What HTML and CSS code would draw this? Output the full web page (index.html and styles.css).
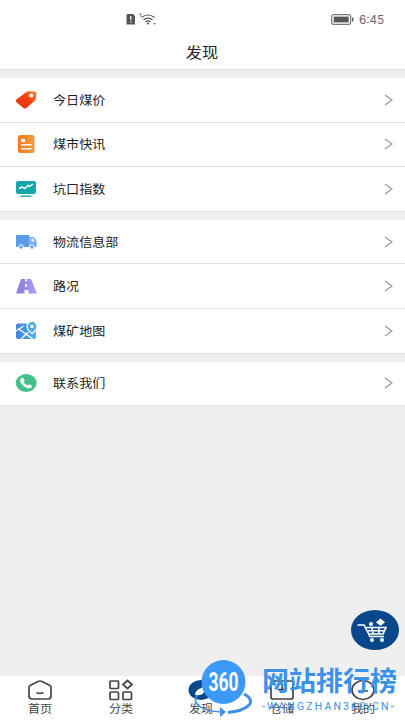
FILE: index.html
```
<!DOCTYPE html>
<html lang="zh-CN">
<head>
<meta charset="utf-8">
<title>发现</title>
<link rel="stylesheet" href="styles.css">
</head>
<body>
<div class="app">
  <div class="status">
    <svg class="signals" width="32" height="14" viewBox="0 0 32 14">
      <path d="M2.500 2h5.500l2 2v8.500H1.500V3z" fill="#555"/><path d="M5.800 4v4M5.800 9.300v1.300" stroke="#fff" stroke-width="1.300"/>
      <path d="M15.500 1v4M14.300 2.500h2.400" stroke="#999" fill="none"/>
      <g fill="none" stroke="#555" stroke-width="1.200"><path d="M16.500 5.500q6.500-5 13 0M18.500 7.800q4.500-3.400 9 0M20.500 9.800q2.500-1.800 5 0"/></g>
      <circle cx="23" cy="11.500" r="1.100" fill="#555"/><path d="M28 11h3l-1.500 2z" fill="#888"/>
    </svg>
    <svg class="battery" width="23" height="11" viewBox="0 0 23 11"><rect x=".7" y=".7" width="19" height="9.600" rx="2" fill="none" stroke="#777" stroke-width="1.200"/><rect x="2.700" y="2.600" width="15" height="5.800" fill="#555"/><path d="M21.700 3.500v4" stroke="#666" stroke-width="1.500"/></svg>
    <span class="time">6:45</span>
  </div>
  <header class="title"><span>发现</span></header>
  <main class="content">
    <section class="group">
      <div class="row">
        <svg class="icon" viewBox="0 0 22 20"><defs><linearGradient id="red" x1="0" x2="1" y1="1" y2="0"><stop stop-color="#e93412"/><stop offset=".55" stop-color="#ed4011"/><stop offset="1" stop-color="#f48b3c"/></linearGradient></defs><path d="M1.500 9.500 11 2.200Q12.500 1.200 14.500 1.300L19 1.600Q21.500 1.800 21.500 3.500L21 8Q20.800 9.500 19.700 10.700L11.500 18Q9.800 19.300 8 17.800L1.300 12Q0 10.700 1.500 9.500Z" fill="url(#red)"/><circle cx="16.300" cy="5.500" r="2" fill="#fff"/></svg>
        <span class="label">今日煤价</span><svg class="chevron" viewBox="0 0 9 12"><path d="m1 1 7 5-7 5"/></svg>
      </div>
      <div class="row">
        <svg class="icon" viewBox="0 0 22 20"><defs><linearGradient id="orange"><stop stop-color="#f37825"/><stop offset="1" stop-color="#eda038"/></linearGradient></defs><rect x="3" y="1" width="16.500" height="18" rx="2.500" fill="url(#orange)"/><path d="M6 10.700h10.500M6 14.700h10.500" stroke="#fff" stroke-width="1.600"/><path d="M6 5h4v3H6z" fill="#fff"/></svg>
        <span class="label">煤市快讯</span><svg class="chevron" viewBox="0 0 9 12"><path d="m1 1 7 5-7 5"/></svg>
      </div>
      <div class="row">
        <svg class="icon" viewBox="0 0 22 20"><rect x="1" y="2" width="20" height="13" rx="2" fill="#18a6ad"/><path d="m4 9.500 3-1.500 3 1.500 3-3 1.500 1L18 5" fill="none" stroke="#fff" stroke-width="1.400"/><path d="M5.500 17.200h11" stroke="#35aeb5" stroke-width="1.600"/></svg>
        <span class="label">坑口指数</span><svg class="chevron" viewBox="0 0 9 12"><path d="m1 1 7 5-7 5"/></svg>
      </div>
    </section>
    <section class="group">
      <div class="row">
        <svg class="icon" viewBox="0 0 22 20"><path d="M1 3h13.500v12H2Q1 15 1 14z" fill="#5b9cec"/><path d="M14.500 5H18q1.200 0 2 1.500l1.700 3V15h-7.200z" fill="#75aef0"/><path d="M16.500 6.500h1.600l1.600 3h-3.200z" fill="#fff"/><g fill="#5b9cec" stroke="#fff"><circle cx="6" cy="15" r="2.200"/><circle cx="17" cy="15" r="2.200"/></g></svg>
        <span class="label">物流信息部</span><svg class="chevron" viewBox="0 0 9 12"><path d="m1 1 7 5-7 5"/></svg>
      </div>
      <div class="row">
        <svg class="icon" viewBox="0 0 22 20"><defs><linearGradient id="purple"><stop stop-color="#8878dd"/><stop offset="1" stop-color="#b29cf3"/></linearGradient></defs><path d="M6 3h10l6 14.500h-8.500V14h-4v3.500H1z" fill="url(#purple)"/><path d="M11 2v3.500M11 8v3" stroke="#fff" stroke-width="1.700"/></svg>
        <span class="label">路况</span><svg class="chevron" viewBox="0 0 9 12"><path d="m1 1 7 5-7 5"/></svg>
      </div>
      <div class="row">
        <svg class="icon" viewBox="0 0 22 20"><defs><linearGradient id="map"><stop stop-color="#4280dc"/><stop offset="1" stop-color="#4db3e7"/></linearGradient></defs><rect x="1" y="2.500" width="20" height="15.500" rx="2" fill="url(#map)"/><path d="M1 10 8.500 5 M3 7.500 18 18M13 11.500 6 18" fill="none" stroke="#fff" stroke-width="1.300"/><path d="M17 12.500q-5-4-5-7a5 5 0 0 1 10 0q0 3-5 7Z" fill="#4dabe4" stroke="#fff" stroke-width="1.200"/><circle cx="17" cy="5.500" r="1.800" fill="#fff"/></svg>
        <span class="label">煤矿地图</span><svg class="chevron" viewBox="0 0 9 12"><path d="m1 1 7 5-7 5"/></svg>
      </div>
    </section>
    <section class="group">
      <div class="row">
        <svg class="icon" viewBox="0 0 22 20"><ellipse cx="11.200" cy="10" rx="10.500" ry="9" fill="#43bf88"/><path d="M6 5.200Q7.500 4 8.500 5.500l1 1.700q.3 1-1 1.800 1.500 2.600 4.300 3.500 1-1.500 2-.9l1.900 1.200q1 .7-.3 1.800-2 1.500-5.300-.2Q6.300 12 5.200 8.200q-.5-2 .8-3Z" fill="#fff"/></svg>
        <span class="label">联系我们</span><svg class="chevron" viewBox="0 0 9 12"><path d="m1 1 7 5-7 5"/></svg>
      </div>
    </section>
  </main>
  <nav class="tabs">
    <div class="tab"><svg viewBox="0 0 26 22"><path d="M2 8.500Q2 7 3.500 6.300L11 2.500Q13 1.500 15 2.500l7.500 3.800Q24 7 24 8.500V17q0 3-3 3H5q-3 0-3-3ZM9.500 13.500q3.500 2 7 0"/></svg><span>首页</span></div>
    <div class="tab"><svg viewBox="0 0 26 22"><rect x="2" y="2" width="8.500" height="7.500" rx="1"/><path d="m19.500 1.500 4.500 4-4.500 4-4.500-4z"/><rect x="2" y="13" width="8.500" height="7.500" rx="1"/><rect x="15" y="13" width="8.500" height="7.500" rx="1"/></svg><span>分类</span></div>
    <div class="tab active"><svg viewBox="0 0 26 22"><ellipse cx="13" cy="11" rx="12.500" ry="10" class="solid"/><path d="M7 16q0-4 4-6l8-4-3 7q-2 4-9 3Z" class="needle"/></svg><span>发现</span></div>
    <div class="tab"><svg viewBox="0 0 26 22"><rect x="2" y="2" width="22" height="18" rx="2"/><path d="M13 7v7M9 10.500h8"/></svg><span>仓储</span></div>
    <div class="tab"><svg viewBox="0 0 26 22"><ellipse cx="13" cy="11" rx="11" ry="9.500"/><path d="M13 6v6h5"/></svg><span>我的</span></div>
  </nav>
  <svg class="cart" viewBox="0 0 48 40"><ellipse cx="24" cy="20" rx="24" ry="20" fill="#08488a"/><g fill="none" stroke="#fff" stroke-width="1.600"><path d="M6.500 15h6.500l6 11.500h14M14.500 17.500H35l-3 6.500H18M17 20.700h16M21 18l1 6M28 18v6"/></g><g fill="#fff"><circle cx="21" cy="30" r="2"/><circle cx="31" cy="30" r="2"/><circle cx="20" cy="14" r="2"/><path d="m29.500 8.500 4.500 3.700-4.500 3.700-4.500-3.700z"/></g></svg>
  <div class="brand">
    <svg class="orbit" viewBox="0 0 62 60"><g fill="none" stroke="#3c92e8"><path d="M3 36C-3 46 10 52 27 53" stroke-width="1.600"/><path d="M50 35C65 43 52 52 34 53.500" stroke-width="3"/></g><circle cx="29.500" cy="23" r="22" fill="#3c99f8"/><path d="m26 48 6 5-6 5z" fill="#3c92e8"/><text x="29.500" y="32" text-anchor="middle" textLength="30" lengthAdjust="spacingAndGlyphs">360</text></svg>
    <div class="words"><div class="name">网站排行榜</div><div class="domain">-WANGZHAN360.CN-</div></div>
  </div>
</div>
</body>
</html>
```
FILE: styles.css
```
* { box-sizing: border-box; }
body { margin: 0; font-family: Roboto, "Noto Sans CJK SC", sans-serif; color: #222; }
svg { display: block; flex: none; }
.app { position: relative; width: 405px; height: 720px; display: flex; flex-direction: column; background: #efefef; overflow: hidden; }
.status { height: 36px; padding: 2px 21px 0 125px; display: flex; align-items: center; background: #fff; }
.battery { margin-left: auto; margin-right: 5px; }
.time { width: 25px; font: 12px Inter, sans-serif; color: #666; white-space: nowrap; transform: scaleX(.97); transform-origin: left; }
.title { height: 34px; background: #fff; display: flex; justify-content: center; align-items: center; border-bottom: 1px solid #dedede; font-size: 15px; line-height: 20px; padding-top: 1px; }
.title span { transform: scaleX(1.08); }
.content { flex: 1; display: flex; flex-direction: column; gap: 8px; padding-top: 8px; }
.group { background: #fff; }
.row { height: 44.600px; display: flex; align-items: center; padding: 0 12px 0 15px; border-bottom: 1px solid #e1e1e1; }
.icon { width: 22px; height: 20px; margin-right: 16px; overflow: visible; }
.label { font-size: 12px; line-height: 18px; padding-top: 2px; transform: scaleX(1.09); transform-origin: left center; }
.chevron { width: 9px; height: 12px; margin-left: auto; fill: none; stroke: #999; stroke-width: 1.300; }
.tabs { height: 44px; display: flex; background: #fff; padding-right: 2px; }
.tab { flex: 1; display: flex; flex-direction: column; align-items: center; padding-top: 3px; font-size: 11px; line-height: 18px; color: #444; }
.tab svg { width: 26px; height: 22px; fill: none; stroke: #444; stroke-width: 1.700; }
.tab span { transform: scaleX(1.1); }
.tab .solid { fill: #08488a; stroke: none; }
.tab .needle { fill: #fff; stroke: none; }
.cart { position: absolute; left: 351px; top: 610px; width: 48px; height: 40px; }
.brand { position: absolute; left: 194px; top: 659px; display: flex; }
.orbit { width: 62px; height: 60px; }
.orbit text { font: bold 25px Roboto, sans-serif; fill: #fff; }
.words { padding-left: 6px; color: #3c92e8; }
.name { height: 41px; font-size: 27px; line-height: 47px; font-weight: 700; white-space: nowrap; }
.domain { font-size: 10.500px; line-height: 14px; letter-spacing: 2.150px; white-space: nowrap; }
```
